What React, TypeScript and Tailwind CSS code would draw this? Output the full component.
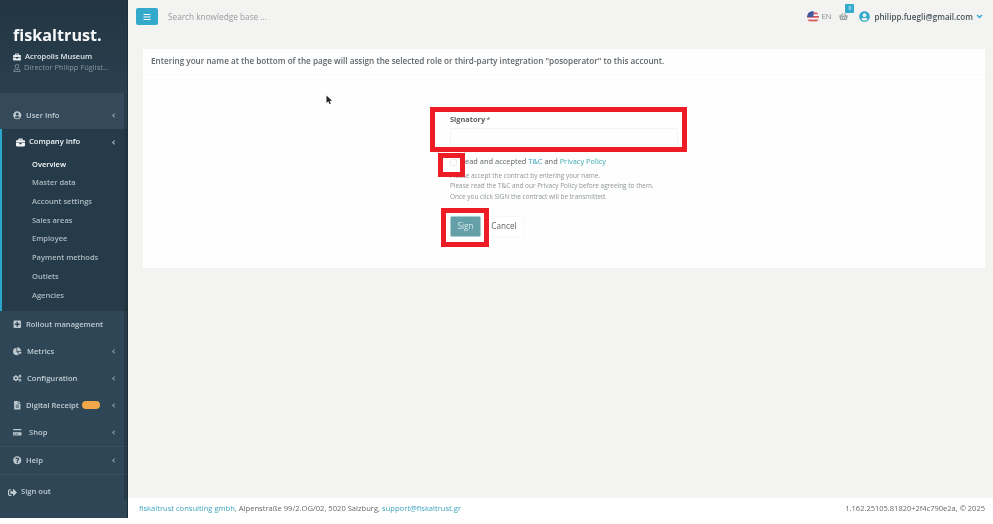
import React from "react";
import {
  FaUserCircle, FaBriefcase, FaPlusSquare, FaChartPie, FaCogs, FaFileAlt, FaCreditCard,
  FaQuestionCircle, FaSignOutAlt, FaShoppingBasket, FaBars, FaAngleLeft, FaAngleDown, FaRegUser,
} from "react-icons/fa";

const font = "font-['Open_Sans','Liberation_Sans',sans-serif]";

function NavRow({ icon, label, chevron = true, badge = false, gap = "gap-[4px]" }: { icon: React.ReactNode; label: string; chevron?: boolean; badge?: boolean; gap?: string }) {
  return (
    <div className="flex h-[27px] items-center pl-[13px] pr-[10px] text-[7.6px] font-semibold text-[#c0ccd3]">
      <div className={`flex items-center ${gap}`}>
        <span className="flex w-[9px] justify-center text-[8.5px] text-[#bcc8ce]">{icon}</span>
        <span>{label}</span>
        {badge && <span className="-ml-[1px] h-[8px] w-[18px] rounded-full bg-[#f0a84a]" />}
      </div>
      {chevron && <FaAngleLeft className="ml-auto text-[7px] text-[#8b9ca7]" />}
    </div>
  );
}

function Flag() {
  return (
    <svg width="12" height="12" viewBox="0 0 12 12">
      <defs>
        <clipPath id="flagclip"><circle cx="6" cy="6" r="6" /></clipPath>
      </defs>
      <g clipPath="url(#flagclip)">
        <rect width="12" height="12" fill="#f4f1f0" />
        <rect y="1.5" width="12" height="1.7" fill="#d9535c" />
        <rect y="5" width="12" height="1.7" fill="#d9535c" />
        <rect y="8.6" width="12" height="1.7" fill="#d9535c" />
        <rect width="6.5" height="6" fill="#3d5a9e" />
      </g>
    </svg>
  );
}

export default function App() {
  const sub = ["Overview", "Master data", "Account settings", "Sales areas", "Employee", "Payment methods", "Outlets", "Agencies"];
  return (
    <div className={`relative h-[524px] w-[993px] overflow-hidden bg-white ${font}`}>
      <div className="flex h-[518px] blur-[0.5px]">
        <aside className="relative flex w-[127px] shrink-0 flex-col bg-[#2e4656]">
          <div className="h-[93px] bg-gradient-to-b from-[#223541] to-[#2a404f] pl-[13px]">
            <div className="mt-[20px] pt-[3px] text-[16.2px] font-bold leading-[24px] text-[#f6f8f9]">fiskaltrust.</div>
            <div className="mt-[4px] flex items-center gap-[4px] text-[7.5px] font-semibold leading-[11px] text-[#e0e6e9]">
              <FaBriefcase className="text-[8px]" />
              <span>Acropolis Museum</span>
            </div>
            <div className="flex items-center gap-[3px] text-[7.5px] leading-[11px] text-[#8799a4]">
              <FaRegUser className="text-[8px]" />
              <span>Director Philipp Füglist...</span>
            </div>
          </div>
          <div className="bg-[#34495a] pt-[9px]">
            <NavRow icon={<FaUserCircle />} label="User Info" />
          </div>
          <div className="h-[182px] border-l-2 border-[#2aa7cb] bg-[#263b4a]">
            <div className="flex h-[26px] items-center pl-[14px] pr-[10px] text-[7.6px] font-semibold text-[#f3f6f7]">
              <FaBriefcase className="mr-[4px] text-[9px]" />
              <span>Company Info</span>
              <FaAngleLeft className="ml-auto text-[7px] text-[#a9b7bf]" />
            </div>
            <div className="pl-[30px]">
              {sub.map((s, i) => (
                <div key={s} className={`flex h-[18.7px] items-center text-[7.5px] font-semibold ${i === 0 ? "text-[#f6f8f9]" : "text-[#adbbc3]"}`}>{s}</div>
              ))}
            </div>
          </div>
          <NavRow icon={<FaPlusSquare />} label="Rollout management" chevron={false} />
          <NavRow icon={<FaChartPie />} label="Metrics" gap="gap-[5px]" />
          <NavRow icon={<FaCogs />} label="Configuration" gap="gap-[5px]" />
          <NavRow icon={<FaFileAlt />} label="Digital Receipt" badge />
          <div className="border-b border-[#3a5161]">
            <NavRow icon={<FaCreditCard />} label="Shop" gap="gap-[7px]" />
          </div>
          <div className="border-b border-[#3a5161]">
            <NavRow icon={<FaQuestionCircle />} label="Help" />
          </div>
          <div className="flex flex-1 items-center gap-[4px] pb-[9px] pl-[8px] text-[7.6px] font-semibold text-[#c0ccd3]">
            <FaSignOutAlt className="text-[9px]" />
            <span>Sign out</span>
          </div>
          <div className="absolute bottom-[18px] right-0 top-[93px] w-[3px] bg-[#1c2c37]/40" />
        </aside>
        <div className="w-[1px] bg-[#1f2f3a]" />
        <div className="flex min-w-0 flex-1 flex-col bg-[#f3f4f1]">
          <header className="flex h-[34px] items-center pl-[8px] pr-[9px]">
            <button className="mb-[1px] flex h-[17px] w-[22px] items-center justify-center rounded-[2px] bg-[#33a9cc] text-[8px] text-white"><FaBars /></button>
            <span className="ml-[10px] text-[8.25px] text-[#969b9d]">Search knowledge base ...</span>
            <div className="ml-auto flex items-center">
              <Flag />
              <span className="ml-[3px] text-[7.5px] text-[#858b8f]">EN</span>
              <span className="relative ml-[8px] flex text-[9px] text-[#9aa3a6]">
                <FaShoppingBasket />
                <span className="absolute -right-[6px] -top-[8px] flex h-[9px] w-[9px] items-center justify-center rounded-[1px] bg-[#33a9cc] text-[5px] text-white">0</span>
              </span>
              <span className="ml-[11px] flex text-[11px] text-[#33a9cc]"><FaUserCircle /></span>
              <span className="ml-[4px] text-[8.1px] font-semibold text-[#4a545d]">philipp.fuegli@gmail.com</span>
              <FaAngleDown className="ml-[2px] text-[9px] text-[#33a9cc]" />
            </div>
          </header>
          <main className="flex-1 px-[15px] pt-[15px] pr-[8px]">
            <section className="h-[219px] bg-[#fdfefd]">
              <div className="flex h-[26px] items-center border-b border-[#f9faf8] pl-[8px] text-[8.17px] font-semibold text-[#5f656a]">
                Entering your name at the bottom of the page will assign the selected role or third-party integration "posoperator" to this account.
              </div>
              <div className="ml-[307px] w-[228px] pt-[40px]">
                <div className="flex h-[10px] items-center text-[7.4px] font-bold text-[#5b6165]">Signatory<span className="ml-[1px] font-normal">*</span></div>
                <div className="mt-[3px] h-[20px] rounded-[1px] border border-[#f3f4f3]" />
                <div className="mt-[9px] flex h-[10px] items-center text-[7.45px] text-[#5f6569]">
                  <span className="h-[7px] w-[7px] rounded-[1px] border border-[#eceeed]" />
                  <span className="ml-[5px]">read and accepted <span className="text-[#2f9dbc]">T&amp;C</span> and <span className="text-[#3fa9b2]">Privacy Policy</span></span>
                </div>
                <div className="mt-[3.5px] text-[6.45px] leading-[10.8px] text-[#8f9599]">
                  <div>Please accept the contract by entering your name.</div>
                  <div>Please read the T&amp;C and our Privacy Policy before agreeing to them.</div>
                  <div>Once you click SIGN the contract will be transmitted.</div>
                </div>
                <div className="mt-[13px] flex items-center">
                  <button className="h-[21px] w-[31px] rounded-[2px] border border-[#a9cdd0] bg-[#65a0a8] text-[8.2px] text-[#d7e8ea]">Sign</button>
                  <button className="ml-[3px] h-[21px] w-[40px] rounded-[2px] border border-[#f7f8f7] bg-white text-[8.2px] text-[#5f6569]">Cancel</button>
                </div>
              </div>
            </section>
          </main>
          <footer className="flex h-[20px] items-center justify-between bg-white pl-[11px] pr-[8px] pt-[1px] text-[7.6px] text-[#646a6e]">
            <span><span className="text-[#3fa5bd]">fiskaltrust consulting gmbh</span>, Alpenstraße 99/2.OG/02, 5020 Salzburg, <span className="text-[#3fa5bd]">support@fiskaltrust.gr</span></span>
            <span className="text-[7.5px]">1.162.25105.81820+2f4c790e2a, © 2025</span>
          </footer>
        </div>
      </div>

      <div className="absolute left-[430px] top-[107px] h-[45px] w-[257px] border-[5px] border-[#ee1c25]" />
      <div className="absolute left-[438px] top-[153px] h-[24px] w-[27px] border-[5px] border-[#ee1c25]" />
      <div className="absolute left-[441px] top-[208px] h-[39px] w-[48px] border-[5px] border-[#ee1c25]" />
      <svg className="absolute left-[326px] top-[95px]" width="7" height="10" viewBox="0 0 7 10">
        <path d="M0.5 0.5 L0.5 8 L2.3 6.3 L3.6 9.3 L4.8 8.7 L3.6 5.9 L6 5.8 Z" fill="#222" />
      </svg>
    </div>
  );
}
